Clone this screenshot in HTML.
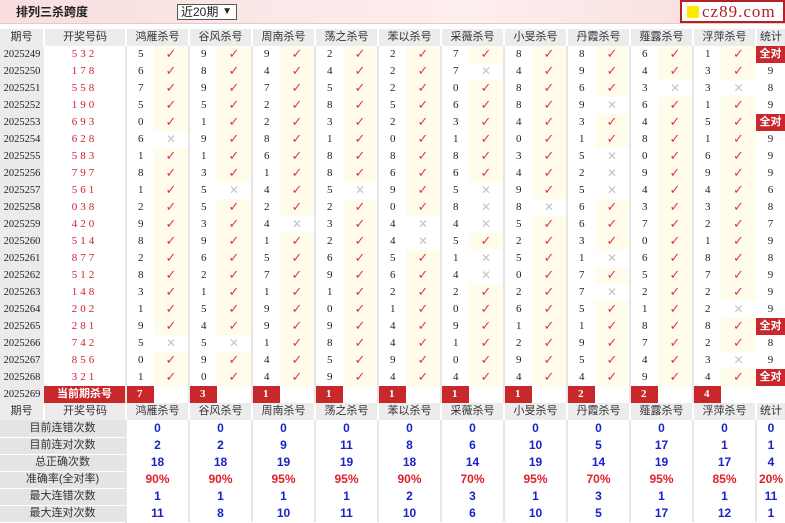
<!DOCTYPE html>
<html><head><meta charset="utf-8"><style>
*{box-sizing:border-box;margin:0;padding:0}
body{width:785px;height:521px;overflow:hidden;background:#fff;font-family:"Liberation Sans","Noto Sans CJK SC",sans-serif;font-size:11px;color:#222;position:relative}
.top{position:absolute;left:0;top:0;width:785px;height:24px;background:linear-gradient(90deg,#f9dede,#fdeeee 60%,#f9dcdc);border-bottom:1px solid #e8c8c8}
.title{position:absolute;left:16px;top:5px;font-weight:bold;font-size:12px;line-height:14px;color:#222}
.sel{position:absolute;left:177px;top:4px;width:60px;height:16px;border:1px solid #555;background:#fff;font-size:12px;line-height:14px;padding-left:3px}
.sel b{position:absolute;right:4px;top:0;font-size:10px}
.logo{position:absolute;left:680px;top:0;width:105px;height:23px;border:2px solid #b3202a;background:#fff;overflow:hidden}
.logo i{position:absolute;left:5px;top:4px;width:12px;height:12px;background:#ffeb00}
.logo span{position:absolute;left:20px;top:0px;font-family:"Liberation Serif",serif;font-size:17px;line-height:19px;color:#b3202a;letter-spacing:1px}
table{position:absolute;left:0;top:29px;border-collapse:collapse;table-layout:fixed;width:785px}
tr{height:17px}
td{height:17px;line-height:15px;padding:0;white-space:nowrap;overflow:hidden;font-family:"Liberation Serif","Noto Sans CJK SC",serif;font-size:11px}
.h td{background:#ececec;text-align:center;color:#333;font-family:"Liberation Sans","Noto Sans CJK SC",sans-serif;font-size:11px}
.p{background:#ebebeb;text-align:center;font-size:10.5px}
.d{text-align:center;color:#d02030;letter-spacing:3px}
.n{padding-left:11px;border-left:2px solid #e6e6e6}
.c,.x{text-align:center;font-family:"DejaVu Sans",sans-serif;font-size:13px;line-height:15px}
.c{background:#fffcec;color:#e0364a}
.x{color:#c4c4c4;font-size:12px}
.s{text-align:center}
.q{background:#c8282c;color:#fff;font-weight:bold;font-family:"Liberation Sans","Noto Sans CJK SC",sans-serif;font-size:11px;text-align:center}
.k td.kn{background:#c8282c;color:#fff;font-weight:bold;padding-left:10px;border-left:2px solid #e6e6e6}
.k td.kr{background:#c8282c;color:#fff;font-weight:bold;text-align:center;font-family:"Liberation Sans","Noto Sans CJK SC",sans-serif}
.st td{text-align:center;font-family:"Liberation Sans",sans-serif;font-weight:bold;font-size:12px;color:#1a22c8;border-left:2px solid #e6e6e6}
.st td.l{background:#e4e4e4;color:#333;font-weight:normal;font-size:11px;font-family:"Liberation Sans","Noto Sans CJK SC",sans-serif;border-bottom:1px solid #fff;border-left:none}
.st.r td{color:#e0202a}
.st.r td.l{color:#333}
.hk{border-left:2px solid #fff}
</style></head><body>
<div class="top"><div class="title">排列三杀跨度</div><div class="sel">近20期<b>▼</b></div></div>
<div class="logo"><i></i><span>cz89.com</span></div>
<table>
<colgroup><col style="width:44px"><col style="width:82px">
<col style="width:28px"><col style="width:35px"><col style="width:28px"><col style="width:35px"><col style="width:28px"><col style="width:35px"><col style="width:28px"><col style="width:35px"><col style="width:28px"><col style="width:35px"><col style="width:28px"><col style="width:35px"><col style="width:28px"><col style="width:35px"><col style="width:28px"><col style="width:35px"><col style="width:28px"><col style="width:35px"><col style="width:28px"><col style="width:35px">
<col style="width:29px"></colgroup>
<tr class="h"><td>期号</td><td class="hk">开奖号码</td><td colspan="2" class="hk">鸿雁杀号</td><td colspan="2" class="hk">谷风杀号</td><td colspan="2" class="hk">周南杀号</td><td colspan="2" class="hk">荡之杀号</td><td colspan="2" class="hk">苯以杀号</td><td colspan="2" class="hk">采薇杀号</td><td colspan="2" class="hk">小旻杀号</td><td colspan="2" class="hk">丹霞杀号</td><td colspan="2" class="hk">薤露杀号</td><td colspan="2" class="hk">浮萍杀号</td><td class="hk">统计</td></tr>
<tr><td class="p">2025249</td><td class="d">532</td><td class="n">5</td><td class="c">✓</td><td class="n">9</td><td class="c">✓</td><td class="n">9</td><td class="c">✓</td><td class="n">2</td><td class="c">✓</td><td class="n">2</td><td class="c">✓</td><td class="n">7</td><td class="c">✓</td><td class="n">8</td><td class="c">✓</td><td class="n">8</td><td class="c">✓</td><td class="n">6</td><td class="c">✓</td><td class="n">1</td><td class="c">✓</td><td class="q">全对</td></tr>
<tr><td class="p">2025250</td><td class="d">178</td><td class="n">6</td><td class="c">✓</td><td class="n">8</td><td class="c">✓</td><td class="n">4</td><td class="c">✓</td><td class="n">4</td><td class="c">✓</td><td class="n">2</td><td class="c">✓</td><td class="n">7</td><td class="x">✕</td><td class="n">4</td><td class="c">✓</td><td class="n">9</td><td class="c">✓</td><td class="n">4</td><td class="c">✓</td><td class="n">3</td><td class="c">✓</td><td class="s">9</td></tr>
<tr><td class="p">2025251</td><td class="d">558</td><td class="n">7</td><td class="c">✓</td><td class="n">9</td><td class="c">✓</td><td class="n">7</td><td class="c">✓</td><td class="n">5</td><td class="c">✓</td><td class="n">2</td><td class="c">✓</td><td class="n">0</td><td class="c">✓</td><td class="n">8</td><td class="c">✓</td><td class="n">6</td><td class="c">✓</td><td class="n">3</td><td class="x">✕</td><td class="n">3</td><td class="x">✕</td><td class="s">8</td></tr>
<tr><td class="p">2025252</td><td class="d">190</td><td class="n">5</td><td class="c">✓</td><td class="n">5</td><td class="c">✓</td><td class="n">2</td><td class="c">✓</td><td class="n">8</td><td class="c">✓</td><td class="n">5</td><td class="c">✓</td><td class="n">6</td><td class="c">✓</td><td class="n">8</td><td class="c">✓</td><td class="n">9</td><td class="x">✕</td><td class="n">6</td><td class="c">✓</td><td class="n">1</td><td class="c">✓</td><td class="s">9</td></tr>
<tr><td class="p">2025253</td><td class="d">693</td><td class="n">0</td><td class="c">✓</td><td class="n">1</td><td class="c">✓</td><td class="n">2</td><td class="c">✓</td><td class="n">3</td><td class="c">✓</td><td class="n">2</td><td class="c">✓</td><td class="n">3</td><td class="c">✓</td><td class="n">4</td><td class="c">✓</td><td class="n">3</td><td class="c">✓</td><td class="n">4</td><td class="c">✓</td><td class="n">5</td><td class="c">✓</td><td class="q">全对</td></tr>
<tr><td class="p">2025254</td><td class="d">628</td><td class="n">6</td><td class="x">✕</td><td class="n">9</td><td class="c">✓</td><td class="n">8</td><td class="c">✓</td><td class="n">1</td><td class="c">✓</td><td class="n">0</td><td class="c">✓</td><td class="n">1</td><td class="c">✓</td><td class="n">0</td><td class="c">✓</td><td class="n">1</td><td class="c">✓</td><td class="n">8</td><td class="c">✓</td><td class="n">1</td><td class="c">✓</td><td class="s">9</td></tr>
<tr><td class="p">2025255</td><td class="d">583</td><td class="n">1</td><td class="c">✓</td><td class="n">1</td><td class="c">✓</td><td class="n">6</td><td class="c">✓</td><td class="n">8</td><td class="c">✓</td><td class="n">8</td><td class="c">✓</td><td class="n">8</td><td class="c">✓</td><td class="n">3</td><td class="c">✓</td><td class="n">5</td><td class="x">✕</td><td class="n">0</td><td class="c">✓</td><td class="n">6</td><td class="c">✓</td><td class="s">9</td></tr>
<tr><td class="p">2025256</td><td class="d">797</td><td class="n">8</td><td class="c">✓</td><td class="n">3</td><td class="c">✓</td><td class="n">1</td><td class="c">✓</td><td class="n">8</td><td class="c">✓</td><td class="n">6</td><td class="c">✓</td><td class="n">6</td><td class="c">✓</td><td class="n">4</td><td class="c">✓</td><td class="n">2</td><td class="x">✕</td><td class="n">9</td><td class="c">✓</td><td class="n">9</td><td class="c">✓</td><td class="s">9</td></tr>
<tr><td class="p">2025257</td><td class="d">561</td><td class="n">1</td><td class="c">✓</td><td class="n">5</td><td class="x">✕</td><td class="n">4</td><td class="c">✓</td><td class="n">5</td><td class="x">✕</td><td class="n">9</td><td class="c">✓</td><td class="n">5</td><td class="x">✕</td><td class="n">9</td><td class="c">✓</td><td class="n">5</td><td class="x">✕</td><td class="n">4</td><td class="c">✓</td><td class="n">4</td><td class="c">✓</td><td class="s">6</td></tr>
<tr><td class="p">2025258</td><td class="d">038</td><td class="n">2</td><td class="c">✓</td><td class="n">5</td><td class="c">✓</td><td class="n">2</td><td class="c">✓</td><td class="n">2</td><td class="c">✓</td><td class="n">0</td><td class="c">✓</td><td class="n">8</td><td class="x">✕</td><td class="n">8</td><td class="x">✕</td><td class="n">6</td><td class="c">✓</td><td class="n">3</td><td class="c">✓</td><td class="n">3</td><td class="c">✓</td><td class="s">8</td></tr>
<tr><td class="p">2025259</td><td class="d">420</td><td class="n">9</td><td class="c">✓</td><td class="n">3</td><td class="c">✓</td><td class="n">4</td><td class="x">✕</td><td class="n">3</td><td class="c">✓</td><td class="n">4</td><td class="x">✕</td><td class="n">4</td><td class="x">✕</td><td class="n">5</td><td class="c">✓</td><td class="n">6</td><td class="c">✓</td><td class="n">7</td><td class="c">✓</td><td class="n">2</td><td class="c">✓</td><td class="s">7</td></tr>
<tr><td class="p">2025260</td><td class="d">514</td><td class="n">8</td><td class="c">✓</td><td class="n">9</td><td class="c">✓</td><td class="n">1</td><td class="c">✓</td><td class="n">2</td><td class="c">✓</td><td class="n">4</td><td class="x">✕</td><td class="n">5</td><td class="c">✓</td><td class="n">2</td><td class="c">✓</td><td class="n">3</td><td class="c">✓</td><td class="n">0</td><td class="c">✓</td><td class="n">1</td><td class="c">✓</td><td class="s">9</td></tr>
<tr><td class="p">2025261</td><td class="d">877</td><td class="n">2</td><td class="c">✓</td><td class="n">6</td><td class="c">✓</td><td class="n">5</td><td class="c">✓</td><td class="n">6</td><td class="c">✓</td><td class="n">5</td><td class="c">✓</td><td class="n">1</td><td class="x">✕</td><td class="n">5</td><td class="c">✓</td><td class="n">1</td><td class="x">✕</td><td class="n">6</td><td class="c">✓</td><td class="n">8</td><td class="c">✓</td><td class="s">8</td></tr>
<tr><td class="p">2025262</td><td class="d">512</td><td class="n">8</td><td class="c">✓</td><td class="n">2</td><td class="c">✓</td><td class="n">7</td><td class="c">✓</td><td class="n">9</td><td class="c">✓</td><td class="n">6</td><td class="c">✓</td><td class="n">4</td><td class="x">✕</td><td class="n">0</td><td class="c">✓</td><td class="n">7</td><td class="c">✓</td><td class="n">5</td><td class="c">✓</td><td class="n">7</td><td class="c">✓</td><td class="s">9</td></tr>
<tr><td class="p">2025263</td><td class="d">148</td><td class="n">3</td><td class="c">✓</td><td class="n">1</td><td class="c">✓</td><td class="n">1</td><td class="c">✓</td><td class="n">1</td><td class="c">✓</td><td class="n">2</td><td class="c">✓</td><td class="n">2</td><td class="c">✓</td><td class="n">2</td><td class="c">✓</td><td class="n">7</td><td class="x">✕</td><td class="n">2</td><td class="c">✓</td><td class="n">2</td><td class="c">✓</td><td class="s">9</td></tr>
<tr><td class="p">2025264</td><td class="d">202</td><td class="n">1</td><td class="c">✓</td><td class="n">5</td><td class="c">✓</td><td class="n">9</td><td class="c">✓</td><td class="n">0</td><td class="c">✓</td><td class="n">1</td><td class="c">✓</td><td class="n">0</td><td class="c">✓</td><td class="n">6</td><td class="c">✓</td><td class="n">5</td><td class="c">✓</td><td class="n">1</td><td class="c">✓</td><td class="n">2</td><td class="x">✕</td><td class="s">9</td></tr>
<tr><td class="p">2025265</td><td class="d">281</td><td class="n">9</td><td class="c">✓</td><td class="n">4</td><td class="c">✓</td><td class="n">9</td><td class="c">✓</td><td class="n">9</td><td class="c">✓</td><td class="n">4</td><td class="c">✓</td><td class="n">9</td><td class="c">✓</td><td class="n">1</td><td class="c">✓</td><td class="n">1</td><td class="c">✓</td><td class="n">8</td><td class="c">✓</td><td class="n">8</td><td class="c">✓</td><td class="q">全对</td></tr>
<tr><td class="p">2025266</td><td class="d">742</td><td class="n">5</td><td class="x">✕</td><td class="n">5</td><td class="x">✕</td><td class="n">1</td><td class="c">✓</td><td class="n">8</td><td class="c">✓</td><td class="n">4</td><td class="c">✓</td><td class="n">1</td><td class="c">✓</td><td class="n">2</td><td class="c">✓</td><td class="n">9</td><td class="c">✓</td><td class="n">7</td><td class="c">✓</td><td class="n">2</td><td class="c">✓</td><td class="s">8</td></tr>
<tr><td class="p">2025267</td><td class="d">856</td><td class="n">0</td><td class="c">✓</td><td class="n">9</td><td class="c">✓</td><td class="n">4</td><td class="c">✓</td><td class="n">5</td><td class="c">✓</td><td class="n">9</td><td class="c">✓</td><td class="n">0</td><td class="c">✓</td><td class="n">9</td><td class="c">✓</td><td class="n">5</td><td class="c">✓</td><td class="n">4</td><td class="c">✓</td><td class="n">3</td><td class="x">✕</td><td class="s">9</td></tr>
<tr><td class="p">2025268</td><td class="d">321</td><td class="n">1</td><td class="c">✓</td><td class="n">0</td><td class="c">✓</td><td class="n">4</td><td class="c">✓</td><td class="n">9</td><td class="c">✓</td><td class="n">4</td><td class="c">✓</td><td class="n">4</td><td class="c">✓</td><td class="n">4</td><td class="c">✓</td><td class="n">4</td><td class="c">✓</td><td class="n">9</td><td class="c">✓</td><td class="n">4</td><td class="c">✓</td><td class="q">全对</td></tr>
<tr class="k"><td class="p">2025269</td><td class="kr">当前期杀号</td><td class="kn">7</td><td></td><td class="kn">3</td><td></td><td class="kn">1</td><td></td><td class="kn">1</td><td></td><td class="kn">1</td><td></td><td class="kn">1</td><td></td><td class="kn">1</td><td></td><td class="kn">2</td><td></td><td class="kn">2</td><td></td><td class="kn">4</td><td></td><td></td></tr>
<tr class="h"><td>期号</td><td class="hk">开奖号码</td><td colspan="2" class="hk">鸿雁杀号</td><td colspan="2" class="hk">谷风杀号</td><td colspan="2" class="hk">周南杀号</td><td colspan="2" class="hk">荡之杀号</td><td colspan="2" class="hk">苯以杀号</td><td colspan="2" class="hk">采薇杀号</td><td colspan="2" class="hk">小旻杀号</td><td colspan="2" class="hk">丹霞杀号</td><td colspan="2" class="hk">薤露杀号</td><td colspan="2" class="hk">浮萍杀号</td><td class="hk">统计</td></tr>
<tr class="st"><td class="l" colspan="2">目前连错次数</td><td colspan="2">0</td><td colspan="2">0</td><td colspan="2">0</td><td colspan="2">0</td><td colspan="2">0</td><td colspan="2">0</td><td colspan="2">0</td><td colspan="2">0</td><td colspan="2">0</td><td colspan="2">0</td><td>0</td></tr>
<tr class="st"><td class="l" colspan="2">目前连对次数</td><td colspan="2">2</td><td colspan="2">2</td><td colspan="2">9</td><td colspan="2">11</td><td colspan="2">8</td><td colspan="2">6</td><td colspan="2">10</td><td colspan="2">5</td><td colspan="2">17</td><td colspan="2">1</td><td>1</td></tr>
<tr class="st"><td class="l" colspan="2">总正确次数</td><td colspan="2">18</td><td colspan="2">18</td><td colspan="2">19</td><td colspan="2">19</td><td colspan="2">18</td><td colspan="2">14</td><td colspan="2">19</td><td colspan="2">14</td><td colspan="2">19</td><td colspan="2">17</td><td>4</td></tr>
<tr class="st r"><td class="l" colspan="2">准确率(全对率)</td><td colspan="2">90%</td><td colspan="2">90%</td><td colspan="2">95%</td><td colspan="2">95%</td><td colspan="2">90%</td><td colspan="2">70%</td><td colspan="2">95%</td><td colspan="2">70%</td><td colspan="2">95%</td><td colspan="2">85%</td><td>20%</td></tr>
<tr class="st"><td class="l" colspan="2">最大连错次数</td><td colspan="2">1</td><td colspan="2">1</td><td colspan="2">1</td><td colspan="2">1</td><td colspan="2">2</td><td colspan="2">3</td><td colspan="2">1</td><td colspan="2">3</td><td colspan="2">1</td><td colspan="2">1</td><td>11</td></tr>
<tr class="st"><td class="l" colspan="2">最大连对次数</td><td colspan="2">11</td><td colspan="2">8</td><td colspan="2">10</td><td colspan="2">11</td><td colspan="2">10</td><td colspan="2">6</td><td colspan="2">10</td><td colspan="2">5</td><td colspan="2">17</td><td colspan="2">12</td><td>1</td></tr>
</table>
</body></html>
